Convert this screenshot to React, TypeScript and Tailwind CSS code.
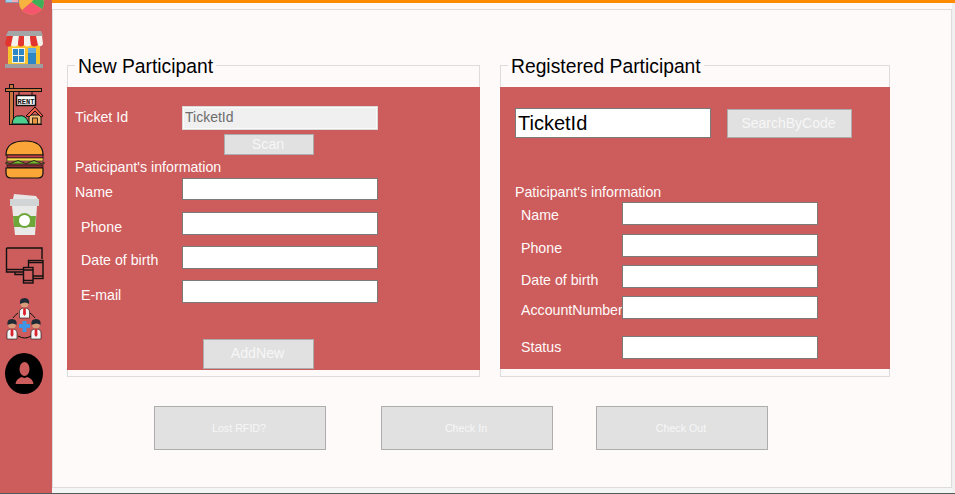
const fontCls = "font-['Liberation_Sans',Arial,sans-serif]";

function Field({ label, labelCls, inputCls }: { label: string; labelCls: string; inputCls: string }) {
  return (
    <div className={"flex items-start " + inputCls}>
      <span className={labelCls + " text-[14.2px] leading-4 text-[#fffafa] whitespace-nowrap"}>{label}</span>
      <input readOnly value="" aria-label={label} className="h-full w-[196px] bg-white border border-[#7a7a7a] outline-none" />
    </div>
  );
}

function Legend({ children, cls }: { children: string; cls: string }) {
  return (
    <span className={"absolute -top-[11px] bg-[#fffafa] px-[3px] text-[19.3px] leading-[23px] text-black whitespace-nowrap " + cls}>
      {children}
    </span>
  );
}

function GreyButton({ children, cls }: { children: string; cls: string }) {
  return (
    <button className={"flex items-center justify-center bg-[#e1e1e1] border border-[#adadad] pr-[2px] text-[#f7f7f7] " + cls}>
      {children}
    </button>
  );
}

function PieCrop() {
  return (
    <svg width="40" height="16" viewBox="0 0 40 16" className="block">
      <rect x="0" y="-4" width="14" height="7" fill="#8d8fa6" />
      <rect x="1" y="-2" width="6" height="4" fill="#9fd0ee" />
      <rect x="7" y="-2" width="6" height="4" fill="#f3a9b5" />
      <circle cx="26.5" cy="2" r="12.5" fill="#f7b23f" />
      <path d="M26.5 2 L17 10 A12.5 12.5 0 0 0 37 9 Z" fill="#f4566d" />
      <path d="M26.5 2 L37 9 A12.5 12.5 0 0 0 39 2 L36 -8 Z" fill="#3fae5a" />
    </svg>
  );
}

function StoreIcon() {
  return (
    <svg width="40" height="38" viewBox="0 0 40 38" className="mt-[14px] block">
      <rect x="3" y="15" width="32" height="20" fill="#f8c52d" />
      <rect x="7" y="18" width="13" height="15" fill="#f7f3e3" />
      <rect x="8" y="19" width="5" height="6" fill="#2f86c5" />
      <rect x="14" y="19" width="5" height="6" fill="#2f86c5" />
      <rect x="8" y="26" width="5" height="6" fill="#2f86c5" />
      <rect x="14" y="26" width="5" height="6" fill="#2f86c5" />
      <rect x="23" y="18" width="8" height="18" fill="#2f86c5" />
      <rect x="23" y="18" width="8" height="5" fill="#63aee0" />
      <path d="M3 1 H36 L38 6 H1 Z" fill="#a3a5a6" />
      <path d="M2 6 H8 L6 16 Q2 18 0 14 Z" fill="#e2352f" />
      <path d="M8 6 H14 L13 15 Q9 18 6 15 Z" fill="#f5f2ec" />
      <path d="M14 6 H19 L19 15 Q16 18 13 15 Z" fill="#e2352f" />
      <path d="M19 6 H25 L26 15 Q22 18 19 15 Z" fill="#f5f2ec" />
      <path d="M25 6 H31 L33 15 Q29 18 26 15 Z" fill="#e2352f" />
      <path d="M31 6 H37 L38 14 Q36 18 33 15 Z" fill="#f5f2ec" />
      <rect x="0" y="34" width="38" height="4" fill="#9c9ea0" />
    </svg>
  );
}

function RentIcon() {
  return (
    <svg width="40" height="44" viewBox="0 0 40 44" className="mt-[16px] block">
      <rect x="4.5" y="0.5" width="4" height="40" fill="#c9733f" stroke="#111" strokeWidth="1" />
      <rect x="0.5" y="4.5" width="36" height="3" fill="#c9733f" stroke="#111" strokeWidth="1" />
      <path d="M14 8 V11 M27 8 V11" stroke="#111" strokeWidth="1" />
      <rect x="11.5" y="11.5" width="19" height="10" fill="#fff" stroke="#111" strokeWidth="1.5" />
      <text x="21" y="19.5" textAnchor="middle" fontFamily="'Liberation Mono',monospace" fontSize="7" fontWeight="700" fill="#111">RENT</text>
      <path d="M7 40 Q8 31 14 32 Q21 30 24 40 Z" fill="#4ecf8f" stroke="#111" strokeWidth="1" />
      <path d="M24 31 H36 V40 H24 Z" fill="#f6bf7c" stroke="#111" strokeWidth="1" />
      <path d="M21 32 L30 23 L38 32 L36 33 L30 27 L24 33 Z" fill="#ef5b45" stroke="#111" strokeWidth="1" />
      <rect x="27.5" y="34" width="5" height="6" fill="#e9953f" stroke="#111" strokeWidth="0.8" />
      <path d="M4 40.5 H37" stroke="#111" strokeWidth="1" />
    </svg>
  );
}

function BurgerIcon() {
  return (
    <svg width="40" height="39" viewBox="0 0 40 39" className="mt-[12px] block">
      <path d="M1 15 Q1 1 20 1 Q38 1 38 15 Z" fill="#f9a537" stroke="#111" strokeWidth="1.2" />
      <rect x="2" y="15" width="36" height="3" fill="#c8414a" stroke="#111" strokeWidth="0.8" />
      <rect x="2" y="18" width="36" height="3" fill="#f9e04b" stroke="#111" strokeWidth="0.6" />
      <path d="M1 22 Q5 25 9 22 T17 22 T25 22 T33 22 T39 22 V24 H1 Z" fill="#7ab52f" stroke="#111" strokeWidth="0.8" />
      <rect x="2" y="25" width="36" height="2.5" fill="#8c2b36" stroke="#111" strokeWidth="0.6" />
      <path d="M1 28 H38 V33 Q38 38 33 38 H6 Q1 38 1 33 Z" fill="#f9a537" stroke="#111" strokeWidth="1.2" />
    </svg>
  );
}

function CoffeeIcon() {
  return (
    <svg width="40" height="42" viewBox="0 0 40 42" className="mt-[15px] block">
      <path d="M8 5 L9 0 L31 2 L33 5 Z" fill="#e8e5e5" />
      <path d="M7 12 H32 L30 41 H10 Z" fill="#e9e9e7" />
      <rect x="5" y="5" width="29" height="7" fill="#d2d5d6" />
      <path d="M8 22 H31 L30 33 H9 Z" fill="#6fa63a" />
      <circle cx="19.5" cy="26.5" r="7.5" fill="#6fa63a" />
      <circle cx="19.5" cy="26.5" r="5.5" fill="#fff" />
    </svg>
  );
}

function DevicesIcon() {
  return (
    <svg width="40" height="37" viewBox="0 0 40 37" fill="none" stroke="#111" strokeWidth="1.4" className="mt-[11px] block">
      <path d="M1.5 1 H37 V12 M1.5 1 V25 H18" />
      <path d="M1.5 22.5 H18" />
      <path d="M10 25 V27.5 H18" />
      <rect x="23.5" y="13.5" width="14.5" height="18" fill="#cd5c5c" />
      <path d="M23.5 15.5 H38 M23.5 29 H38" />
      <rect x="18.5" y="20.5" width="9.5" height="15.5" fill="#cd5c5c" />
      <path d="M18.5 23 H28 M18.5 33.5 H28" />
    </svg>
  );
}

function Person({ x, y }: { x: number; y: number }) {
  return (
    <g transform={`translate(${x} ${y})`}>
      <path d="M-5 20 V14 Q-5 10 0 10 Q5 10 5 14 V20 Z" fill="#f4f4f4" stroke="#111" strokeWidth="0.6" />
      <path d="M-1.2 10 H1.2 L1.5 16 L0 18 L-1.5 16 Z" fill="#d8232f" />
      <circle cx="0" cy="5.5" r="4" fill="#d99d7c" />
      <path d="M-4.5 6 Q-5.5 0 0 0 Q5.5 0 4.5 6 Q1 3 -4.5 6 Z" fill="#1f2a36" />
    </g>
  );
}

function TeamIcon() {
  return (
    <svg width="40" height="42" viewBox="0 0 40 42" className="mt-[14px] block">
      <path d="M8 20 Q10 17 13 15 M30 20 Q28 17 25 15 M13 38 Q20 42 26 38" fill="none" stroke="#111" strokeWidth="1" />
      <Person x={19.5} y={0} />
      <Person x={7} y={21} />
      <Person x={31} y={21} />
      <path d="M17.5 23 H21.5 V26 H25 V30 H21.5 V34 H17.5 V30 H14 V26 H17.5 Z" fill="#3f95e6" />
    </svg>
  );
}

function AvatarIcon() {
  return (
    <svg width="40" height="41" viewBox="0 0 40 41" className="mt-[13px] block">
      <ellipse cx="19" cy="20.5" rx="19" ry="20.5" fill="#000" />
      <ellipse cx="19.5" cy="16" rx="5" ry="7" fill="#cd5c5c" />
      <path d="M10.5 31 Q11 26 16.5 24 L19.5 25 L22.5 24 Q28 26 28.5 31 Z" fill="#cd5c5c" />
    </svg>
  );
}

export default function App() {
  return (
    <div className={"h-[494px] w-[955px] overflow-hidden bg-[#f0f0f0] " + fontCls}>
      <div className="flex h-[493px]">
        <aside className="h-full w-[52px] shrink-0 overflow-hidden bg-[#cd5c5c] pl-[5px]">
          <PieCrop />
          <StoreIcon />
          <RentIcon />
          <BurgerIcon />
          <CoffeeIcon />
          <DevicesIcon />
          <TeamIcon />
          <AvatarIcon />
        </aside>

        <main className="h-full w-[903px]">
          <div className="h-[3px] bg-[#ff8c00]" />
          <div className="w-[900px]">
            <div className="h-[6px] bg-[#fffafa]" />
            <section className="h-[479px] border border-[#dcdcdc] bg-[#fffafa] pl-[14px] pt-[55px]">
              <div className="flex gap-5">
                {/* new participant */}
                <div className="relative h-[312px] w-[413px] border border-[#dcdcdc] pt-[21px]">
                  <Legend cls="left-[7px]">New Participant</Legend>
                  <div className="-mx-px h-[283px] bg-[#cd5c5c] pl-[8px] pt-[19px]">
                    <div className="flex h-[24px] items-center">
                      <span className="w-[107px] pb-[2px] text-[14.2px] leading-4 text-[#fffafa]">Ticket Id</span>
                      <input readOnly value="TicketId" aria-label="Ticket Id" className="h-full w-[196px] border border-[#d9d9d9] bg-[#f0f0f0] px-[2px] pb-[2px] text-[14px] text-[#6d6d6d] shadow-[inset_0_0_0_1px_#fafafa] outline-none" />
                    </div>
                    <GreyButton cls="ml-[149px] mt-[4px] h-[21px] w-[90px] text-[14.2px]">Scan</GreyButton>
                    <p className="mt-[4px] text-[14.2px] leading-4 text-[#fffafa]">Paticipant's information</p>
                    <Field label="Name" labelCls="w-[107px] pt-[6px]" inputCls="mt-[3px] h-[22px]" />
                    <Field label="Phone" labelCls="ml-[6px] w-[101px] pt-[7px]" inputCls="mt-[12px] h-[23px]" />
                    <Field label="Date of birth" labelCls="ml-[6px] w-[101px] pt-[6px]" inputCls="mt-[11px] h-[23px]" />
                    <Field label="E-mail" labelCls="ml-[6px] w-[101px] pt-[7px]" inputCls="mt-[11px] h-[23px]" />
                    <GreyButton cls="ml-[128px] mt-[36px] h-[30px] w-[111px] text-[14.2px]">AddNew</GreyButton>
                  </div>
                </div>

                {/* registered participant */}
                <div className="relative h-[312px] w-[390px] border border-[#dcdcdc] pt-[21px]">
                  <Legend cls="left-[7px]">Registered Participant</Legend>
                  <div className="-mx-px h-[282px] bg-[#cd5c5c] pl-[15px] pt-[21px]">
                    <div className="flex items-start">
                      <input readOnly value="TicketId" aria-label="TicketId" className="h-[30px] w-[196px] border border-[#7a7a7a] bg-white px-[2px] text-[20px] text-black outline-none" />
                      <GreyButton cls="ml-[16px] mt-[1px] h-[29px] w-[125px] text-[14px]">SearchByCode</GreyButton>
                    </div>
                    <p className="mt-[46px] text-[14.2px] leading-4 text-[#fffafa]">Paticipant's information</p>
                    <Field label="Name" labelCls="ml-[6px] w-[101px] pt-[5px]" inputCls="mt-[2px] h-[23px]" />
                    <Field label="Phone" labelCls="ml-[6px] w-[101px] pt-[6px]" inputCls="mt-[9px] h-[23px]" />
                    <Field label="Date of birth" labelCls="ml-[6px] w-[101px] pt-[7px]" inputCls="mt-[8px] h-[23px]" />
                    <Field label="AccountNumber" labelCls="ml-[6px] w-[101px] pt-[6px]" inputCls="mt-[8px] h-[23px]" />
                    <Field label="Status" labelCls="ml-[6px] w-[101px] pt-[3px]" inputCls="mt-[17px] h-[23px]" />
                  </div>
                </div>
              </div>

              <div className="ml-[87px] mt-[29px] flex">
                <GreyButton cls="h-[44px] w-[172px] text-[10.7px]">Lost RFID?</GreyButton>
                <GreyButton cls="ml-[55px] h-[44px] w-[172px] text-[10.7px]">Check In</GreyButton>
                <GreyButton cls="ml-[43px] h-[44px] w-[172px] text-[10.7px]">Check Out</GreyButton>
              </div>
            </section>
            <div className="h-[5px] bg-[#f4f6f5]" />
          </div>
        </main>
      </div>
      <div className="h-px bg-[#4f5b5b]" />
    </div>
  );
}
